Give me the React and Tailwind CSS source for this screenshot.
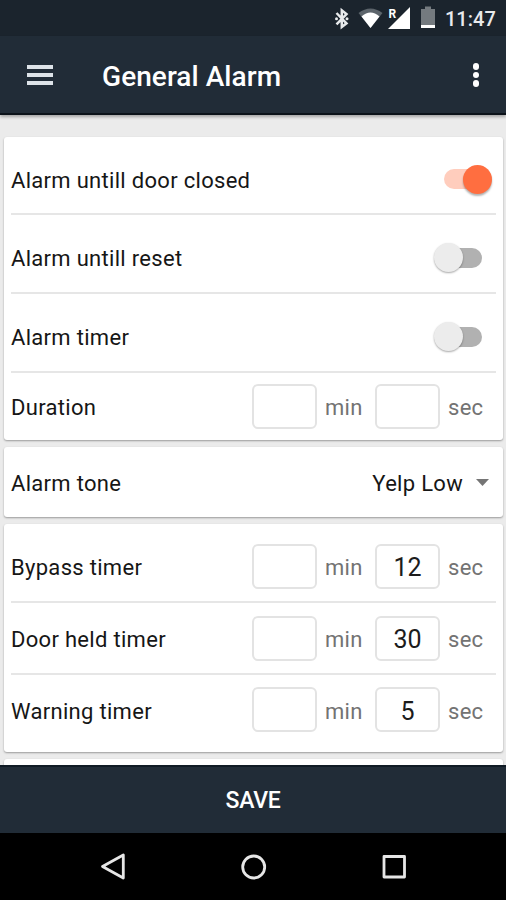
import React, { useState } from 'react';

function StatusBar() {
  return (
    <div className="h-9 shrink-0 bg-[#1b242d] flex items-center pl-[334px]">
      <svg className="w-[109px] h-9 shrink-0" viewBox="0 0 109 36" fill="none">
        {/* bluetooth */}
        <path d="M2.500 13L12.500 23.300L7.800 27V10.300L12.500 14L2.500 24.300" stroke="#e8eaec" strokeWidth="2.500" />
        <circle cx="2.500" cy="18.700" r="1.500" fill="#e8eaec" />
        <circle cx="13" cy="18.700" r="1.500" fill="#e8eaec" />
        {/* wifi */}
        <path d="M24.500 13Q36.500 4 48.500 13L36.500 28Z" fill="#5c646b" />
        <path d="M27.500 16.500Q36.500 8.500 45.500 16.500L36.500 28Z" fill="#fff" />
        {/* signal */}
        <path d="M76 7V29H54Z" fill="#fff" />
        <rect x="54" y="8" width="9" height="11" fill="#1b242d" />
        <text x="54.500" y="18" fontSize="12" fontWeight="700" fontFamily="Roboto, sans-serif" letterSpacing="0" fill="#fff">R</text>
        {/* battery */}
        <path d="M87 9H91V6.500H97V9H101V25H87Z" fill="#747a7f" />
        <path d="M87 25H101V28H87Z" fill="#fff" />
      </svg>
      <span className="ml-[2px] pt-[2px] text-[20px] leading-9 font-medium text-[#e8eaec] tracking-[0px]">11:47</span>
    </div>
  );
}

function Header() {
  return (
    <header className="relative z-10 h-[79px] shrink-0 bg-[#212c37] border-b-2 border-[#0b1219] shadow-[0_2px_3px_rgba(0,0,0,0.3)] flex items-center pl-[27px] pr-[27px]">
      <button className="flex flex-col gap-[4px]" aria-label="Menu">
        <span className="w-[26px] h-[4px] bg-[#dde3e8]" />
        <span className="w-[26px] h-[4px] bg-[#dde3e8]" />
        <span className="w-[26px] h-[4px] bg-[#dde3e8]" />
      </button>
      <h1 className="ml-[49px] pt-[4px] flex-1 text-[28px] leading-8 font-medium text-white tracking-[0.06px]">General Alarm</h1>
      <button className="flex flex-col gap-[2px] pt-[1px]" aria-label="More">
        <span className="size-[6.500px] rounded-full bg-white" />
        <span className="size-[6.500px] rounded-full bg-white" />
        <span className="size-[6.500px] rounded-full bg-white" />
      </button>
    </header>
  );
}

function Card({ children }) {
  return (
    <section className="ml-1 mr-[3px] px-[7px] rounded-[3px] bg-white shadow-[0_1px_2px_rgba(0,0,0,0.35)]">
      {children}
    </section>
  );
}

function Toggle({ on, onChange }) {
  return (
    <button
      role="switch"
      aria-checked={on}
      onClick={onChange}
      className={on ? 'flex items-center mr-[4px]' : 'flex flex-row-reverse items-center mr-[14px]'}
    >
      <span className={on ? 'w-[34px] h-5 -mr-[15px] rounded-full bg-[#ffcdbd]' : 'w-[34px] h-5 -ml-[15px] rounded-full bg-[#b1b1b1]'} />
      <span
        className={
          on
            ? 'z-[1] size-[29px] rounded-full bg-[#ff6e40] shadow-[0_2px_2px_rgba(0,0,0,0.3)]'
            : 'z-[1] size-[29px] rounded-full bg-[#ececec] shadow-[0_1px_2px_rgba(0,0,0,0.35)]'
        }
      />
    </button>
  );
}

function ToggleRow({ label, className, initial = false }) {
  const [on, setOn] = useState(initial);
  return (
    <div className={`${className} flex items-center justify-between border-b-2 border-[#e6e6e6]`}>
      <span className="pt-[3px]">{label}</span>
      <Toggle on={on} onChange={() => setOn(!on)} />
    </div>
  );
}

function TimeRow({ label, sec, className }) {
  return (
    <div className={`${className} flex items-center`}>
      <span className="flex-1 pt-[4px]">{label}</span>
      <span className="w-[65px] h-[45px] rounded-[6px] border-2 border-[#e3e3e3]" />
      <span className="w-[58px] pl-2 pt-[4px] text-[#737373]">min</span>
      <span className="w-[65px] h-[45px] rounded-[6px] border-2 border-[#e3e3e3] flex items-center justify-center pt-[4px] text-[25px] tracking-normal text-[#1c1c1c]">
        {sec}
      </span>
      <span className="w-14 pl-2 pt-[4px] text-[#737373]">sec</span>
    </div>
  );
}

export default function App() {
  return (
    <div className="w-full h-[900px] overflow-hidden flex flex-col bg-[#ebebeb] font-['Roboto',sans-serif] text-[22px] leading-7 tracking-[0.3px] text-[#161616]">
      <StatusBar />
      <Header />

      <main className="flex-1 min-h-0 overflow-hidden pt-[22px] flex flex-col gap-[7px]">
        <Card>
          <ToggleRow label="Alarm untill door closed" className="h-[78px] pt-[8px]" initial />
          <ToggleRow label="Alarm untill reset" className="h-[79px] pt-[8px]" />
          <ToggleRow label="Alarm timer" className="h-[79px] pt-[8px]" />
          <TimeRow label="Duration" className="h-[67px] pb-[1px]" />
        </Card>

        <Card>
          <div className="h-[70px] flex items-center">
            <span className="flex-1 pt-[3px]">Alarm tone</span>
            <span className="pt-[3px]">Yelp Low</span>
            <svg className="ml-[13px] mr-[7px] w-[13px] h-[7px]" viewBox="0 0 13 7">
              <path d="M0 0H13L6.500 7Z" fill="#757575" />
            </svg>
          </div>
        </Card>

        <Card>
          <TimeRow label="Bypass timer" sec="12" className="h-[79px] pt-[7px] border-b-2 border-[#e6e6e6]" />
          <TimeRow label="Door held timer" sec="30" className="h-[72px] border-b-2 border-[#e6e6e6]" />
          <TimeRow label="Warning timer" sec="5" className="h-[77px] pb-[8px]" />
        </Card>

        <Card>
          <div className="h-[70px]" />
        </Card>
      </main>

      <button className="relative h-[68px] shrink-0 bg-[#212c37] border-t-2 border-[#101b25] pt-[2px] text-[23px] font-medium tracking-[-0.3px] text-white">
        SAVE
      </button>

      <nav className="h-[67px] shrink-0 bg-black flex items-center">
        <svg className="w-full h-[67px]" viewBox="0 0 506 67" fill="none" stroke="#e6e6e6" strokeWidth="2.800" strokeLinejoin="round">
          <path d="M102.500 33.500L123.300 22V45Z" />
          <circle cx="253.700" cy="34" r="11" />
          <rect x="384" y="23.500" width="20.500" height="20.500" />
        </svg>
      </nav>
    </div>
  );
}
